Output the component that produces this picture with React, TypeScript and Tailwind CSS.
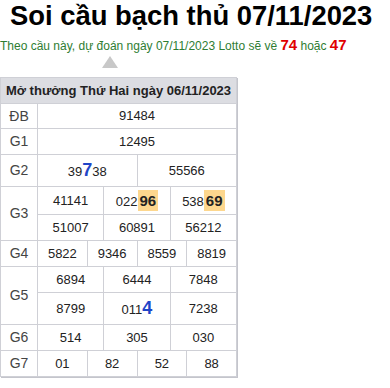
import React from "react";

const cell = "bg-white flex items-center justify-center";

function Row({
  label,
  h,
  cols,
  items,
}: {
  label: string;
  h: string;
  cols: string;
  items: React.ReactNode[];
}) {
  return (
    <div className={`flex gap-[1px] ${h}`}>
      <div className={`${cell} w-[36px] shrink-0 text-[14px] text-[#444]`}>{label}</div>
      <div className={`flex-1 grid ${cols} gap-[1px]`}>
        {items.map((it, i) => (
          <div key={i} className={cell}>
            {it}
          </div>
        ))}
      </div>
    </div>
  );
}

function Row2({
  label,
  h1,
  h2,
  a,
  b,
}: {
  label: string;
  h1: string;
  h2: string;
  a: React.ReactNode[];
  b: React.ReactNode[];
}) {
  return (
    <div className="flex gap-[1px]">
      <div className={`${cell} w-[36px] shrink-0 text-[14px] text-[#444]`}>{label}</div>
      <div className="flex-1 flex flex-col gap-[1px]">
        <div className={`grid grid-cols-3 gap-[1px] ${h1}`}>
          {a.map((it, i) => (
            <div key={i} className={cell}>
              {it}
            </div>
          ))}
        </div>
        <div className={`grid grid-cols-3 gap-[1px] ${h2}`}>
          {b.map((it, i) => (
            <div key={i} className={cell}>
              {it}
            </div>
          ))}
        </div>
      </div>
    </div>
  );
}

const hl = "inline-block px-[2px] leading-[21px] text-[15px] font-bold bg-[#fdd78e]";

export default function App() {
  return (
    <div
      className="w-[390px] h-[388px] bg-white text-[#222] overflow-hidden"
      style={{ fontFamily: '"Liberation Sans", Arial, sans-serif' }}
    >
      <h1 className="pl-[10px] h-[31px] text-[27.4px] font-bold leading-[31px] text-black whitespace-nowrap">
        Soi cầu bạch thủ 07/11/2023
      </h1>
      <div className="mt-[5px] h-[18px] text-[12px] leading-[18px] text-[#2e7d32] whitespace-nowrap">
        Theo cầu này, dự đoán ngày 07/11/2023 Lotto sẽ về{" "}
        <b className="text-[15px] text-[#e00000]">74</b> hoặc{" "}
        <b className="text-[15px] text-[#e00000]">47</b>
      </div>
      <div className="h-[23px] pl-[102px] pt-[2px]">
        <div className="w-0 h-0 border-l-[8px] border-r-[8px] border-b-[12px] border-l-transparent border-r-transparent border-b-[#c8c8c8]" />
      </div>
      <div className="w-[237px] bg-[#cfd0d6] p-[1px] flex flex-col gap-[1px] text-[13px] shadow-[1px_1px_0_#c4c5cc]">
        <div className="h-[25px] bg-[#dcdde2] flex items-center justify-center font-bold text-[13px] text-[#222] whitespace-nowrap">
          Mở thưởng Thứ Hai ngày 06/11/2023
        </div>
        <Row label="ĐB" h="h-[24px]" cols="grid-cols-1" items={["91484"]} />
        <Row label="G1" h="h-[25px]" cols="grid-cols-1" items={["12495"]} />
        <Row
          label="G2"
          h="h-[31px]"
          cols="grid-cols-2"
          items={[
            <span key="a">
              39<b className="text-[18px] text-[#1f45c8]">7</b>38
            </span>,
            "55566",
          ]}
        />
        <Row2
          label="G3"
          h1="h-[27px]"
          h2="h-[25px]"
          a={[
            "41141",
            <span key="b">
              022<b className={hl}>96</b>
            </span>,
            <span key="c">
              538<b className={hl}>69</b>
            </span>,
          ]}
          b={["51007", "60891", "56212"]}
        />
        <Row label="G4" h="h-[25px]" cols="grid-cols-4" items={["5822", "9346", "8559", "8819"]} />
        <Row2
          label="G5"
          h1="h-[25px]"
          h2="h-[31px]"
          a={["6894", "6444", "7848"]}
          b={[
            "8799",
            <span key="d">
              011<b className="text-[18px] text-[#1f45c8]">4</b>
            </span>,
            "7238",
          ]}
        />
        <Row label="G6" h="h-[25px]" cols="grid-cols-3" items={["514", "305", "030"]} />
        <Row label="G7" h="h-[25px]" cols="grid-cols-4" items={["01", "82", "52", "88"]} />
      </div>
    </div>
  );
}
